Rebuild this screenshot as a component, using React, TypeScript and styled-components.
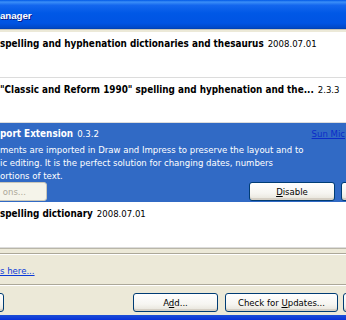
import React, { FC } from 'react';
import styled, { createGlobalStyle } from 'styled-components';

const GlobalStyle = createGlobalStyle`
  html, body {
    margin: 0;
    padding: 0;
    background: #ece9d8;
  }
  body {
    font-family: Tahoma, 'DejaVu Sans Condensed', 'DejaVu Sans', sans-serif;
    font-size: 9.5px;
  }
`;

const Window = styled.div`
  display: flex;
  flex-direction: column;
  width: 346px;
  height: 320px;
  overflow: hidden;
  background: #ece9d8;
`;

const TitleBar = styled.div`
  display: flex;
  align-items: center;
  height: 29px;
  flex-shrink: 0;
  padding-top: 1px;
  box-sizing: border-box;
  background: linear-gradient(
    to bottom,
    #0058e6 0%,
    #3b8ff8 7%,
    #1467ee 18%,
    #0058e6 45%,
    #0054e3 80%,
    #0049c9 95%,
    #003fb0 100%
  );
  color: white;
  font-family: 'Liberation Sans', Arial, sans-serif;
  font-weight: bold;
  font-size: 9.8px;
  letter-spacing: -0.1px;
  text-shadow: 1px 1px 0 #0a1e8c;
`;

const Body = styled.div`
  display: flex;
  flex-direction: column;
  flex: 1;
  padding-top: 2px;
  border-top: 1px solid #c9c6b8;
`;

const List = styled.div`
  display: flex;
  flex-direction: column;
  height: 216px;
  flex-shrink: 0;
  background: white;
  border-bottom: 1px solid #b9b6a8;
`;

const Row = styled.div<{ $height: number }>`
  display: flex;
  flex-direction: column;
  height: ${({ $height }) => $height}px;
  flex-shrink: 0;
  padding-top: 5px;
  box-sizing: border-box;
  border-bottom: 1px solid #dcdcdc;
  color: #000;
`;

const SelectedRow = styled(Row)`
  background: #316ac5;
  color: white;
  border-bottom: none;
  padding-top: 4px;
`;

const RowHead = styled.div`
  display: flex;
  align-items: baseline;
  white-space: nowrap;
  line-height: 13px;
`;

const Name = styled.span`
  font-weight: bold;
  font-size: 9.85px;
`;

const Version = styled.span`
  margin-left: 4px;
`;

const Publisher = styled.a`
  margin-left: auto;
  padding-right: 1px;
  color: #0c2cc8;
  text-decoration: underline;
  cursor: pointer;
`;

const Description = styled.div`
  margin-top: 3px;
  line-height: 13px;
  white-space: pre;
`;

const RowButtons = styled.div`
  display: flex;
  gap: 6px;
  height: 19px;
`;

const Spacer = styled.div`
  flex: 1;
`;

const XpButton = styled.button<{ $width: number; $disabled?: boolean }>`
  display: flex;
  align-items: center;
  justify-content: center;
  width: ${({ $width }) => $width}px;
  height: 19px;
  flex-shrink: 0;
  padding: 0;
  border: 1px solid ${({ $disabled }) => ($disabled ? '#c9c7ba' : '#003c74')};
  border-radius: 3px;
  background: ${({ $disabled }) =>
    $disabled ? '#f5f4ea' : 'linear-gradient(to bottom, #ffffff 0%, #f6f5f1 60%, #e6e3d9 100%)'};
  color: ${({ $disabled }) => ($disabled ? '#aca899' : '#000')};
  font-family: inherit;
  font-size: 9.5px;
  box-shadow: ${({ $disabled }) => ($disabled ? 'none' : 'inset 0 -2px 0 #d6d0c5')};
`;

const CutButton = styled(XpButton)`
  justify-content: flex-end;
  padding-right: 20px;
`;

const EdgeCut = styled.div<{ $width: number; $side: 'left' | 'right'; $pull?: number }>`
  display: flex;
  justify-content: ${({ $side }) => ($side === 'left' ? 'flex-end' : 'flex-start')};
  width: ${({ $width }) => $width}px;
  margin-left: ${({ $pull }) => ($pull ? -$pull : 0)}px;
  overflow: hidden;
  flex-shrink: 0;
`;

const Footer = styled.div`
  display: flex;
  flex-direction: column;
  flex: 1;
  padding-top: 4px;
`;

const LinkLine = styled.div`
  display: flex;
  align-items: center;
  height: 28px;
  padding-top: 2px;
  border-top: 1px solid #aca899;
  border-bottom: 1px solid #aca899;
  box-shadow: inset 0 1px 0 #fff, 0 1px 0 #fff;
`;

const MoreLink = styled.a`
  color: #0a3ad8;
  text-decoration: underline;
`;

const ButtonBar = styled.div`
  display: flex;
  align-items: center;
  gap: 7px;
  padding-top: 8px;
  height: 19px;
`;

const BottomFrame = styled.div`
  height: 5px;
  margin-top: auto;
  flex-shrink: 0;
  background: linear-gradient(to bottom, #1c4fd6, #0831d9);
`;

const U = styled.span`
  text-decoration: underline;
`;

const App: FC = () => {
  return (
    <>
      <GlobalStyle />
      <Window>
        <TitleBar>anager</TitleBar>
        <Body>
          <List>
            <Row $height={46}>
              <RowHead>
                <Name>spelling and hyphenation dictionaries and thesaurus</Name>
                <Version>2008.07.01</Version>
              </RowHead>
            </Row>
            <Row $height={45}>
              <RowHead>
                <Name>"Classic and Reform 1990" spelling and hyphenation and the...</Name>
                <Version>2.3.3</Version>
              </RowHead>
            </Row>
            <SelectedRow $height={79}>
              <RowHead>
                <Name>port Extension</Name>
                <Version>0.3.2</Version>
                <Publisher>Sun Mic</Publisher>
              </RowHead>
              <Description>
                {'ments are imported in Draw and Impress to preserve the layout and to\nic editing. It is the perfect solution for changing dates, numbers\nortions of text.'}
              </Description>
              <RowButtons>
                <EdgeCut $width={47} $side="left">
                  <CutButton $width={82} $disabled>
                    ons...
                  </CutButton>
                </EdgeCut>
                <Spacer />
                <XpButton $width={86}>
                  <span>
                    <U>D</U>isable
                  </span>
                </XpButton>
                <EdgeCut $width={5} $side="right">
                  <XpButton $width={40} />
                </EdgeCut>
              </RowButtons>
            </SelectedRow>
            <Row $height={46}>
              <RowHead>
                <Name>spelling dictionary</Name>
                <Version>2008.07.01</Version>
              </RowHead>
            </Row>
          </List>
          <Footer>
            <LinkLine>
              <MoreLink>s here...</MoreLink>
            </LinkLine>
            <ButtonBar>
              <EdgeCut $width={4} $side="left">
                <XpButton $width={40} />
              </EdgeCut>
              <Spacer />
              <XpButton $width={85}>
                <span>
                  A<U>d</U>d...
                </span>
              </XpButton>
              <XpButton $width={113}>
                <span>
                  Check for <U>U</U>pdates...
                </span>
              </XpButton>
              <EdgeCut $width={3} $side="right" $pull={2}>
                <XpButton $width={40} />
              </EdgeCut>
            </ButtonBar>
          </Footer>
        </Body>
        <BottomFrame />
      </Window>
    </>
  );
};

export default App;
